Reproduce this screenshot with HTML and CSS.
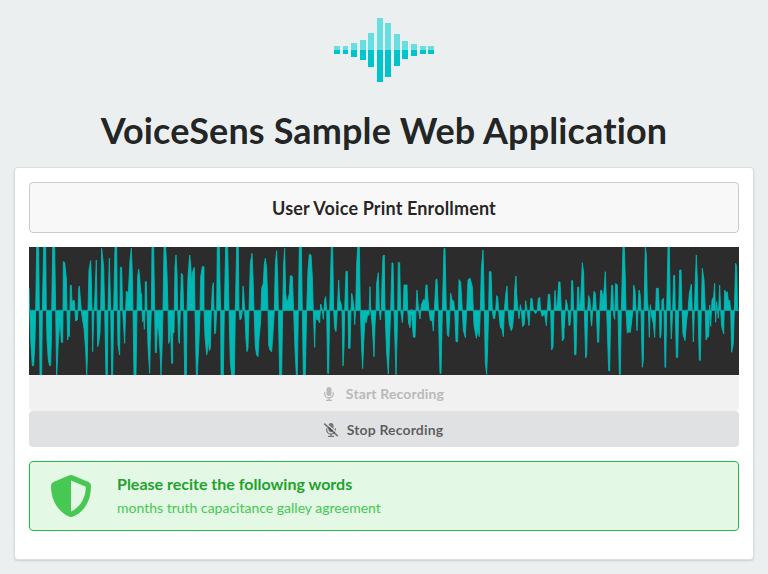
FILE: index.html
```html
<!DOCTYPE html>
<html lang="en">
<head>
<meta charset="utf-8">
<title>VoiceSens Sample Web Application</title>
<link rel="stylesheet" href="styles.css">
</head>
<body>
<header class="header">
  <svg class="logo" viewBox="0 0 100 64" aria-hidden="true">
    <path fill="#66dfe1" d="M0 28h6v4H0zM9 28h5v4H9zM17 25h6v7h-6zM26 22h6v10h-6zM34 15h6v17h-6zM43 0h6v32h-6zM51 5h6v27h-6zM60 16h6v16h-6zM68 23h6v9h-6zM77 26h6v6h-6zM86 28h6v4h-6zM94 28h6v4h-6z"/>
    <path fill="#00c4cb" d="M0 32h6v4H0zM9 32h5v4H9zM17 32h6v7h-6zM26 32h6v10h-6zM34 32h6v17h-6zM43 32h6v32h-6zM51 32h6v27h-6zM60 32h6v16h-6zM68 32h6v9h-6zM77 32h6v6h-6zM86 32h6v4h-6zM94 32h6v4h-6z"/>
  </svg>
  <h1 class="title">VoiceSens Sample Web Application</h1>
</header>
<main class="segment">
  <h2 class="subtitle">User Voice Print Enrollment</h2>
  <svg class="wave" viewBox="0 0 2130 384" preserveAspectRatio="none" role="img" aria-label="Voice waveform">
    <g class="signal">
    <g transform="translate(-15 -21)"><path d="M15 211V145L17 211 20 300 25 377H29L33 300 35 211 38 21H44L46 211 48 405H53L55 211 59 21H65L67 211 69 300 73 360 77 378 80 375 82 300 83 211 86 21H92L95 211 98 405 100 370 103 300 107 252H109L112 307H116L117 211 118 65 122 67 127 115 129 211 131 300 134 280 136 290 138 211 139 136H142L144 190 148 180 151 182 153 211 155 243 160 240 162 211 164 145 166 138 169 175 172 211 175 235 180 265 185 330 188 405 190 360 192 211 195 90 200 62 202 120 204 211 206 335 208 270 210 211 212 185 217 60 219 211 221 320 224 310 228 278 230 211 233 25 239 80 242 211 246 405H250L252 211 256 55 260 211 263 405H266L269 211 273 21H278L280 211 282 315 287 345 288 211 289 82H293L296 211 298 245 302 310 305 211 307 153 313 160 318 60 322 25 325 100 327 211 330 405H336L339 211 341 110 344 87 347 110 350 155 353 165 354 211 356 245 359 235 361 268 363 211 364 125H367L369 211 372 320 377 400 379 300 382 211 384 21H389L392 211 394 338H397L400 260 404 270 408 330 411 405 414 330 417 211 420 21H425L429 100 432 211 434 310 437 300 439 230 443 370H446L446 280 450 278 451 211 453 80 456 45 459 100 461 211 464 300 466 310 469 211 472 100 476 105 479 211 482 405H487L489 211 492 110 497 45 500 70 503 130 506 95 511 82 513 211 517 405H520L525 300 528 211 530 110 535 80H540V211Z"/></g>
    <g transform="translate(525 -21)"><path d="M0 211L3 290 8 345 11 330 13 290 16 332 19 325 22 211 25 145 28 128 30 211 32 282 35 275 38 211 40 21H46L49 180 50 211 51 405H58L61 211 65 21H71L75 211 79 370 83 405H91L94 211 98 21H103L105 211 108 240 112 235 115 211 117 138 119 155 122 211 126 300 129 335 132 325 135 211 139 70 144 40 147 110 150 211 154 320 158 345 162 350 165 295 169 255 171 211 173 145 178 130 181 70 184 55 188 85 192 211 194 315 198 330 203 335 207 280 211 211 214 70 218 32 221 110 223 211 227 405H233L236 211 239 70 242 25 245 160 248 185 252 180 256 160 259 107 265 109 269 211 273 330 277 405H280L283 211 286 21H292L295 211 298 405H304L308 211 312 90 316 43 321 45 325 110 328 211 332 322 335 211 337 238 343 240 347 249 350 192 355 211 358 238 362 180 365 170 368 211 371 400H374L377 211 382 21H386L389 211 392 265 396 275 400 211 404 120 407 180 411 190 414 211 417 378 420 320 422 211 426 94H430L432 211 434 325H438L441 211 443 160 446 175 450 205 452 254 455 211 458 75 461 21H466L469 211 473 325 476 386 479 310 483 237 487 249 490 229 495 225 498 140 500 211 505 260 510 350 513 255 516 211 518 130 523 98 526 211 529 240 532 211 534 125 537 50 540 45V211Z"/></g>
    <g transform="translate(1065 -21)"><path d="M0 211V45L3 211 8 340 13 402 16 320 20 211 24 69H27L30 211 33 310 36 404 39 300 41 211 43 68H47L50 211 55 248 58 211 60 135H69L71 211 74 250 78 263 82 208 88 291 93 292 96 211 99 150 102 190 104 211 108 237 112 195 119 178 123 182 126 135H129L132 180 135 211 139 241 145 243 148 273 151 211 156 118H159L163 211 168 400H171L175 211 180 25H183L187 211 190 285 194 290 198 211 200 160 204 179 209 183 212 211 216 305H221L223 211 225 119 230 125 235 211 238 270 244 293 248 211 252 120 258 114 265 140 268 211 270 255 277 295 282 268 286 290 289 211 292 90 297 30 299 100 301 211 304 370 308 403 311 320 314 211 316 95H321L325 211 328 235 332 236 335 211 338 167 341 170 344 211 349 262 354 267 358 290 361 211 365 165 369 138 372 211 376 253 382 272 386 260 390 211 392 150 396 108 398 160 402 211 405 236 409 194 412 211 416 260 421 252 425 182 429 211 435 257 438 211 441 174 444 176 448 211 455 221 460 211 463 175 467 172 470 211 474 229 482 223 487 257 490 211 493 163H497L500 211 503 330 507 320 510 211 513 151 517 211 521 180 524 126H528L532 211 535 303 540 295V211Z"/></g>
    <g transform="translate(1605 -21)"><path d="M0 211V265L4 211 6 179 9 190 12 211 15 257 18 255 21 211 23 122H26L29 211 32 344H36L39 211 41 141H44L46 211 50 180 55 68 59 100 61 211 65 354 68 345 71 211 74 167 78 180 81 245 83 258 86 211 90 154 94 160 97 211 101 307H104L107 211 110 151H113L118 180 124 95 128 211 134 392H137L140 211 143 136H146L149 225 152 238 155 130 160 135 162 211 166 403H169L172 211 177 21H181L184 120 186 211 190 280 194 275 199 277 204 235 207 211 209 135 213 150 216 211 219 272 222 211 225 150 228 160 231 211 235 382 238 360 240 211 244 21 247 45 250 180 253 211 256 292 259 194 263 230 268 250 272 292 275 211 277 145H283L286 211 288 294 291 285 294 180 298 175 300 211 303 382H305L308 211 312 21H316L319 211 322 297 326 211 329 106H332L334 211 337 352H341L344 211 347 90H351L354 211 357 282 363 302 368 240 372 211 376 160 382 133 385 211 388 306 391 211 394 120 397 45 400 120 402 211 406 361H409L412 211 415 85 420 120 424 211 426 300 431 290 434 290 437 195 440 259 444 180 449 170 452 130 455 247 458 185 463 235 467 135 470 211 473 259 479 282 482 150 487 160 490 155 494 190 497 180 500 211 503 337 508 310 511 211 515 70 518 80 521 211 525 211Z"/></g>
    </g>
    <path class="axis" d="M0 190.5H2130"/>
  </svg>
  <div class="buttons">
    <button class="button disabled" disabled>
      <svg class="mic" viewBox="0 0 10 14" aria-hidden="true"><rect x="2.5" width="5" height="9" rx="2.5" fill="currentColor"/><path d="M.7 5.2v1.5a4.3 4.3 0 0 0 8.6 0V5.2M5 11v2.3M2 13.3h6" fill="none" stroke="currentColor" stroke-width="1.3"/></svg>
      <span>Start Recording</span>
    </button>
    <button class="button stop">
      <svg class="mic-off" viewBox="0 0 16 14" aria-hidden="true"><rect x="5.5" width="5" height="9" rx="2.5" fill="currentColor"/><path d="M3.7 5.2v1.5a4.3 4.3 0 0 0 8.6 0V5.2M8 11v2.3M5 13.3h6" fill="none" stroke="currentColor" stroke-width="1.3"/><path d="M2-.3L16 11.5" stroke="#e0e1e2" stroke-width="1.3"/><path d="M1.2.7L14.8 13.2" stroke="currentColor" stroke-width="1.6"/></svg>
      <span>Stop Recording</span>
    </button>
  </div>
  <section class="message">
    <svg class="shield" viewBox="0 0 40 42" aria-hidden="true"><path fill="currentColor" fill-rule="evenodd" d="M18.5.3Q20-.3 21.5.3L37.5 7Q40 8 40 11C40 26 33 37.500 21.500 41.700Q20 42.300 18.500 41.700C8 37.500 0 26 0 11Q0 8 2.500 7ZM20 5.600V36.600C29 32.500 34.700 23 34.900 11.800Z"/></svg>
    <div>
      <h3 class="message-title">Please recite the following words</h3>
      <p class="words">months truth capacitance galley agreement</p>
    </div>
  </section>
</main>
</body>
</html>
```
FILE: styles.css
```css
* { box-sizing: border-box; }
body {
  margin: 0;
  height: 574px;
  padding: 18px 14px 0;
  overflow: hidden;
  background: #ebeff0;
  color: rgba(0, 0, 0, .87);
  font: 14px/20px Lato, "Liberation Sans", sans-serif;
  font-variant-ligatures: none;
}
h1, h2, h3, p { margin: 0; }
.header { height: 149px; text-align: center; }
.logo { display: block; width: 100px; height: 64px; margin: 0 auto 25px; shape-rendering: crispEdges; }
.title { font-size: 36px; line-height: 46px; font-weight: 700; letter-spacing: .13px; white-space: nowrap; }
.segment {
  height: 393px;
  padding: 14px;
  background: #fff;
  border: 1px solid rgba(34, 36, 38, .15);
  border-radius: 4px;
  box-shadow: 0 1px 2px rgba(34, 36, 38, .15);
}
.subtitle {
  height: 51px;
  margin-bottom: 14px;
  border: 1px solid #c9caca;
  border-radius: 4px;
  background: #f8f8f8;
  font-size: 18px;
  line-height: 50px;
  letter-spacing: .15px;
  text-align: center;
}
.wave { display: block; width: 710px; height: 128px; background: #2c2c2c; }
.signal { fill: #00b9b5; stroke: #00b9b5; stroke-width: 2.5; stroke-linejoin: bevel; }
.axis { stroke: #00a5a1; stroke-width: 3; }
.buttons { display: flex; flex-direction: column; margin-bottom: 14px; }
.button {
  display: flex;
  align-items: center;
  justify-content: center;
  width: 100%;
  height: 36px;
  padding: 2px 0 0;
  border: 0;
  border-radius: 4px;
  background: #e0e1e2;
  color: rgba(0, 0, 0, .6);
  font: 700 14px/20px Lato, sans-serif;
  font-variant-ligatures: none;
  letter-spacing: .15px;
}
.button.stop { padding-right: 2px; }
.disabled { background: #f1f1f1; color: #b9b9b9; }
.mic { width: 10px; height: 14px; margin-right: 12px; }
.mic-off { width: 16px; height: 14px; margin-right: 8px; opacity: .8; }
.message {
  display: flex;
  align-items: center;
  height: 70px;
  padding-left: 21px;
  border: 1px solid #21ba45;
  border-radius: 4px;
  background: #e3f8e5;
  color: #46c853;
}
.shield { width: 40px; height: 42px; margin-right: 26px; }
.message-title { margin-bottom: 4px; color: #1ea32d; font-size: 16px; line-height: 20px; }
.words { line-height: 20px; }
```
